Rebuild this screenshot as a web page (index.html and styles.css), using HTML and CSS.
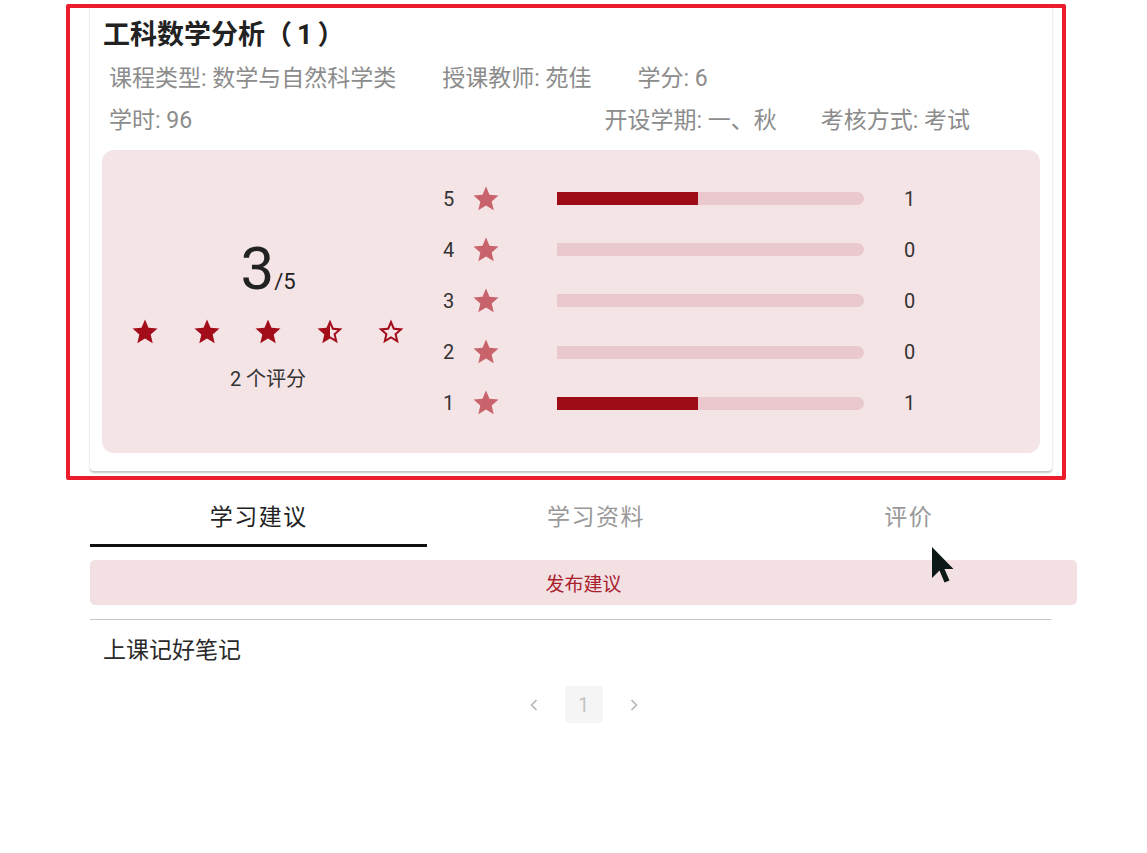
FILE: index.html
```html
<!DOCTYPE html>
<html lang="zh-CN">
<head>
<meta charset="utf-8">
<title>工科数学分析（1）</title>
<link rel="stylesheet" href="styles.css">
</head>
<body>
<div class="page">
  <div class="card">
    <h1 class="title">工科数学分析<span class="title-num">（1）</span></h1>
    <div class="meta-row meta-row-1">
      <span class="meta">课程类型: 数学与自然科学类</span>
      <span class="meta">授课教师: 苑佳</span>
      <span class="meta">学分: 6</span>
    </div>
    <div class="meta-row meta-row-2">
      <span class="meta">学时: 96</span>
      <div class="meta-right">
        <span class="meta">开设学期: 一、秋</span>
        <span class="meta">考核方式: 考试</span>
      </div>
    </div>
    <div class="rating-box">
      <div class="rating-summary">
        <div class="score"><span class="score-big">3</span><span class="score-small">/5</span></div>
        <div class="stars">
          <svg class="star" viewBox="0 0 24 24"><path d="M12 17.27L18.18 21l-1.64-7.03L22 9.24l-7.19-.61L12 2 9.19 8.63 2 9.24l5.46 4.73L5.82 21z"/></svg>
          <svg class="star" viewBox="0 0 24 24"><path d="M12 17.27L18.18 21l-1.64-7.03L22 9.24l-7.19-.61L12 2 9.19 8.63 2 9.24l5.46 4.73L5.82 21z"/></svg>
          <svg class="star" viewBox="0 0 24 24"><path d="M12 17.27L18.18 21l-1.64-7.03L22 9.24l-7.19-.61L12 2 9.19 8.63 2 9.24l5.46 4.73L5.82 21z"/></svg>
          <svg class="star" viewBox="0 0 24 24"><path d="M22 9.24l-7.19-.62L12 2 9.19 8.63 2 9.24l5.46 4.73L5.82 21 12 17.27 18.18 21l-1.63-7.03L22 9.24zM12 15.4V6.1l1.71 4.04 4.38.38-3.32 2.88 1 4.28L12 15.4z"/></svg>
          <svg class="star" viewBox="0 0 24 24"><path d="M22 9.24l-7.19-.62L12 2 9.19 8.63 2 9.24l5.46 4.73L5.82 21 12 17.27 18.18 21l-1.63-7.03L22 9.24zM12 15.4l-3.760 2.27 1-4.28-3.32-2.88 4.38-.38L12 6.1l1.71 4.05 4.38.38-3.32 2.88 1 4.28L12 15.4z"/></svg>
        </div>
        <div class="count">2 个评分</div>
      </div>
      <div class="rating-bars">
        <div class="bar-row">
          <span class="bar-num">5</span>
          <svg class="bar-star" viewBox="0 0 24 24"><path d="M12 17.27L18.18 21l-1.64-7.03L22 9.24l-7.19-.61L12 2 9.19 8.63 2 9.24l5.46 4.73L5.82 21z"/></svg>
          <div class="bar-track"><div class="bar-fill" style="width:46%"></div></div>
          <span class="bar-count">1</span>
        </div>
        <div class="bar-row">
          <span class="bar-num">4</span>
          <svg class="bar-star" viewBox="0 0 24 24"><path d="M12 17.27L18.18 21l-1.64-7.03L22 9.24l-7.19-.61L12 2 9.19 8.63 2 9.24l5.46 4.73L5.82 21z"/></svg>
          <div class="bar-track"><div class="bar-fill" style="width:0%"></div></div>
          <span class="bar-count">0</span>
        </div>
        <div class="bar-row">
          <span class="bar-num">3</span>
          <svg class="bar-star" viewBox="0 0 24 24"><path d="M12 17.27L18.18 21l-1.64-7.03L22 9.24l-7.19-.61L12 2 9.19 8.63 2 9.24l5.46 4.73L5.82 21z"/></svg>
          <div class="bar-track"><div class="bar-fill" style="width:0%"></div></div>
          <span class="bar-count">0</span>
        </div>
        <div class="bar-row">
          <span class="bar-num">2</span>
          <svg class="bar-star" viewBox="0 0 24 24"><path d="M12 17.27L18.18 21l-1.64-7.03L22 9.24l-7.19-.61L12 2 9.19 8.63 2 9.24l5.46 4.73L5.82 21z"/></svg>
          <div class="bar-track"><div class="bar-fill" style="width:0%"></div></div>
          <span class="bar-count">0</span>
        </div>
        <div class="bar-row">
          <span class="bar-num">1</span>
          <svg class="bar-star" viewBox="0 0 24 24"><path d="M12 17.27L18.18 21l-1.64-7.03L22 9.24l-7.19-.61L12 2 9.19 8.63 2 9.24l5.46 4.73L5.82 21z"/></svg>
          <div class="bar-track"><div class="bar-fill" style="width:46%"></div></div>
          <span class="bar-count">1</span>
        </div>
      </div>
    </div>
  </div>

  <div class="tabs">
    <div class="tab tab-active">学习建议</div>
    <div class="tab">学习资料</div>
    <div class="tab">评价</div>
  </div>

  <button class="publish">发布建议</button>
  <div class="divider"></div>
  <div class="advice">上课记好笔记</div>

  <div class="pager">
    <span class="pager-btn"><svg viewBox="0 0 14 14"><path d="M9.5 2L4.5 7 9.5 12"/></svg></span>
    <span class="pager-page">1</span>
    <span class="pager-btn"><svg viewBox="0 0 14 14"><path d="M4.5 2L9.5 7 4.5 12"/></svg></span>
  </div>
</div>

<div class="annotation"></div>
<svg class="cursor" viewBox="0 0 24 38"><path d="M1 0 L1 31 L8.5 23.5 L13.5 35.5 L18.5 33.5 L13.5 22 L22.5 22 Z"/></svg>
</body>
</html>
```

FILE: styles.css
```css
* {
  box-sizing: border-box;
}

html, body {
  margin: 0;
  padding: 0;
  background: #ffffff;
}

body {
  font-family: Roboto, "Noto Sans CJK SC", sans-serif;
  color: #222222;
  position: relative;
  min-height: 853px;
}

.page {
  margin-left: 90px;
  width: 987px;
}

/* ---------- card ---------- */
.card {
  width: 962px;
  background: #ffffff;
  border-radius: 0 0 4px 4px;
  box-shadow: 0 2px 2px rgba(0, 0, 0, 0.22), 0 0 1px rgba(0, 0, 0, 0.12);
  padding: 17px 12px 18px 12px;
}

.title {
  margin: 0;
  font-size: 27px;
  font-weight: 700;
  line-height: 36px;
  color: #222222;
  padding-left: 1px;
}

.title-num {
  letter-spacing: 5px;
}

.meta-row {
  display: flex;
  align-items: center;
  padding-left: 7px;
  height: 42px;
  font-size: 23px;
  color: #8c8c8c;
  line-height: 42px;
}

.meta-row-1 {
  margin-top: 5px;
}

.meta-row .meta {
  margin-right: 46px;
  white-space: nowrap;
}

.meta-row-2 {
  padding-right: 70px;
}

.meta-right {
  margin-left: auto;
  display: flex;
}

.meta-right .meta:first-child {
  margin-right: 44px;
}

.meta-right .meta:last-child {
  margin-right: 0;
}

/* ---------- rating box ---------- */
.rating-box {
  margin-top: 8px;
  height: 303px;
  background: #f5e4e6;
  border-radius: 12px;
  padding: 23px 0;
  display: grid;
  grid-template-columns: 332px 1fr;
}

.rating-summary {
  display: flex;
  flex-direction: column;
  align-items: center;
  padding-top: 66px;
}

.score {
  line-height: 60px;
  height: 60px;
  color: #222222;
  white-space: nowrap;
}

.score-big {
  font-size: 60px;
}

.score-small {
  font-size: 22px;
}

.stars {
  display: flex;
  gap: 31.5px;
  margin-top: 18px;
}

.star {
  width: 30px;
  height: 30px;
  fill: #a20d19;
  display: block;
}

.count {
  margin-top: 18px;
  font-size: 20px;
  line-height: 28px;
  color: #333333;
}

.rating-bars {
  display: flex;
  flex-direction: column;
}

.bar-row {
  height: 51.2px;
  display: flex;
  align-items: center;
  padding-left: 9px;
}

.bar-num {
  width: 12px;
  font-size: 20px;
  color: #333333;
}

.bar-star {
  width: 30px;
  height: 30px;
  margin-left: 16px;
  fill: #c8636b;
  display: block;
}

.bar-track {
  width: 307px;
  height: 13px;
  margin-left: 56px;
  background: #e9c9cd;
  border-radius: 0 7px 7px 0;
  overflow: hidden;
}

.bar-fill {
  height: 100%;
  background: #9d0c17;
}

.bar-count {
  margin-left: 40px;
  font-size: 20px;
  color: #333333;
}

/* ---------- tabs ---------- */
.tabs {
  display: flex;
  width: 963px;
  margin-top: 18px;
}

.tab {
  flex: 1 1 auto;
  height: 58px;
  display: flex;
  align-items: center;
  justify-content: center;
  font-size: 23px;
  letter-spacing: 1.5px;
  color: #999999;
  border-bottom: 3px solid transparent;
  padding: 0 16px 4px 16px;
}

.tab-active {
  color: #222222;
  border-bottom-color: #111111;
}

/* ---------- publish button ---------- */
.publish {
  display: block;
  width: 987px;
  height: 45px;
  margin-top: 13px;
  border: none;
  border-radius: 5px;
  background: #f3e0e3;
  color: #a8202c;
  font-family: Roboto, "Noto Sans CJK SC", sans-serif;
  font-size: 19px;
  padding: 0;
}

.divider {
  width: 961px;
  margin-top: 14px;
  border-top: 1px solid #c8c8c8;
}

.advice {
  margin-top: 16px;
  padding-left: 13px;
  font-size: 23px;
  line-height: 30px;
  color: #2a2a2a;
}

/* ---------- pager ---------- */
.pager {
  display: flex;
  justify-content: center;
  align-items: center;
  gap: 12px;
  margin-top: 20px;
}

.pager-btn {
  width: 38px;
  height: 37px;
  display: flex;
  align-items: center;
  justify-content: center;
}

.pager-btn svg {
  width: 14px;
  height: 14px;
  fill: none;
  stroke: #b8b8b8;
  stroke-width: 1.7;
}

.pager-page {
  width: 38px;
  height: 37px;
  border-radius: 4px;
  background: #f5f5f5;
  color: #c4c4c4;
  font-size: 20px;
  display: flex;
  align-items: center;
  justify-content: center;
}

/* ---------- overlays ---------- */
.annotation {
  position: absolute;
  left: 66px;
  top: 4px;
  width: 1000px;
  height: 476px;
  border: 4px solid #ed1c2a;
  border-radius: 2px;
  pointer-events: none;
}

.cursor {
  position: absolute;
  left: 931px;
  top: 547px;
  width: 24px;
  height: 38px;
  fill: #0d1917;
  pointer-events: none;
}
```
